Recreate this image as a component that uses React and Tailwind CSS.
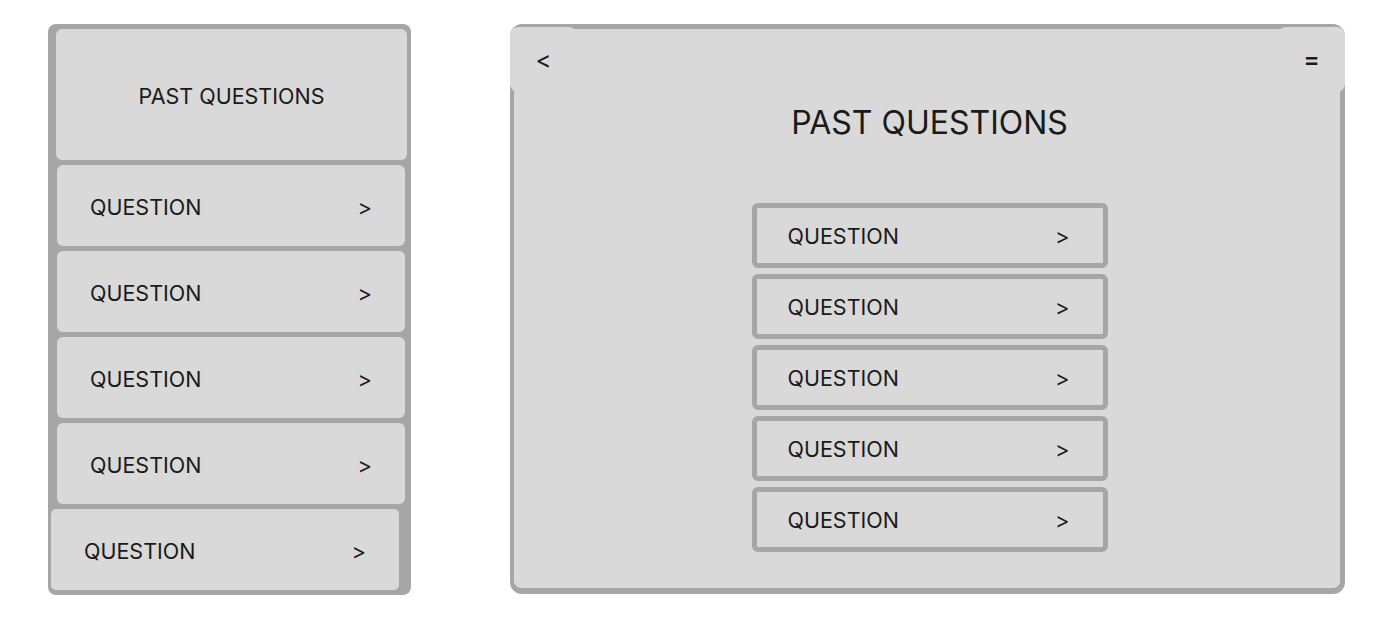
const questions = ["QUESTION", "QUESTION", "QUESTION", "QUESTION"]

const SideRow = ({ label }) => (
  <div className="h-[81px] mr-[2px] ml-[1px] flex items-center justify-between pt-[3px] pl-[33px] pr-[33px] bg-[#d9d9d9] rounded-md">
    <span>{label}</span>
    <span className="text-[22px]">&gt;</span>
  </div>
)

const MainRow = ({ label }) => (
  <div className="w-[356px] h-[65px] flex items-center justify-between pt-[2px] pl-[31px] pr-[33px] bg-[#d9d9d9] border-[5px] border-[#a6a6a6] rounded-md">
    <span>{label}</span>
    <span className="text-[22px]">&gt;</span>
  </div>
)

const App = () => {
  return (
    <div
      className="min-h-screen bg-white text-[#1a1a1a] text-[21.5px] flex gap-[99px] pt-[24px] pl-[48px]"
      style={{ fontFamily: "Inter, 'Noto Sans', sans-serif" }}
    >
      {/* side list */}
      <div className="w-[363px] h-[571px] bg-[#a6a6a6] rounded-lg flex flex-col gap-[5px] pt-[5px] pr-[4px] pb-[2px] pl-[8px]">
        <div className="h-[131px] flex items-center justify-center pt-[4px] bg-[#d9d9d9] rounded-md">
          PAST QUESTIONS
        </div>
        {questions.map((q, i) => (
          <SideRow key={i} label={q} />
        ))}
        <div className="h-[87px] -mt-[3px] -ml-2 mr-[5px] flex items-center justify-between pt-[3px] px-[33px] bg-[#d9d9d9] border-[3px] border-[#a6a6a6] rounded-lg">
          <span>QUESTION</span>
          <span className="text-[22px]">&gt;</span>
        </div>
      </div>

      {/* main panel */}
      <div className="relative w-[835px] h-[570px] bg-[#d9d9d9] border-[5px] border-l-4 border-b-[6px] border-[#a6a6a6] rounded-xl flex flex-col items-center pt-[74px]">
        <button className="absolute -left-[4px] -top-[2px] w-[67px] h-[65px] bg-[#d9d9d9] rounded-lg flex items-center justify-center text-[24px]">
          &lt;
        </button>
        <button className="absolute -right-[5px] -top-[2px] w-[67px] h-[65px] bg-[#d9d9d9] rounded-lg flex items-center justify-center text-[24px] font-semibold">
          =
        </button>
        <h1 className="text-[32px] leading-10 ml-[5px]">PAST QUESTIONS</h1>
        <div className="mt-[60px] ml-[5px] flex flex-col gap-[6px]">
          {[1, 2, 3, 4, 5].map((n) => (
            <MainRow key={n} label="QUESTION" />
          ))}
        </div>
      </div>
    </div>
  )
}

export default App
